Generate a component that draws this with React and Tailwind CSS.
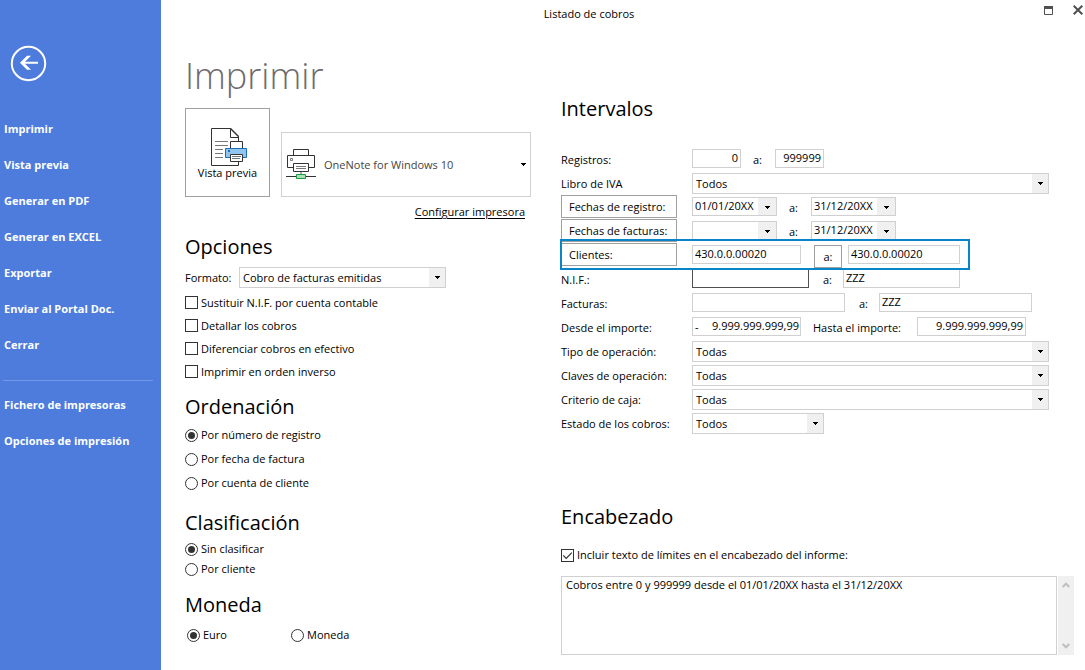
import React from "react";

const field =
  "block border border-[#d0d0d0] bg-white px-[2px] pb-[2px] text-[11px] leading-4 text-black outline-none";

function Caret({ className = "" }) {
  return (
    <svg className={className} width="5" height="3" viewBox="0 0 5 3" aria-hidden="true" shapeRendering="crispEdges">
      <path d="M0 0h5v1H4v1H3v1H2V2H1V1H0z" fill="#000" />
    </svg>
  );
}

function Select({ id, label, value, className = "", options = [] }) {
  return (
    <span className={`relative block h-[21px] ${className}`}>
      <select
        id={id}
        aria-label={label}
        defaultValue={value}
        className="block h-full w-full appearance-none border border-[#d0d0d0] bg-white pl-[3px] pr-5 text-[11px] leading-[18px] text-black outline-none"
      >
        <option>{value}</option>
        {options.map((o) => (
          <option key={o}>{o}</option>
        ))}
      </select>
      <span className="pointer-events-none absolute inset-y-px right-px flex w-4 items-center justify-center bg-[#f0f0f0]">
        <Caret />
      </span>
    </span>
  );
}

function DateBox({ label, value }) {
  return (
    <span className="mt-[2px] flex h-[19px] w-[85px] border border-[#d0d0d0]">
      <input aria-label={label} defaultValue={value} className="w-0 flex-1 bg-white px-[2px] pb-[2px] text-[11px] leading-4 outline-none" />
      <button type="button" aria-label={`Abrir calendario: ${label}`} className="flex w-[18px] items-center justify-center bg-[#f0f0f0] pt-[2px]">
        <Caret />
      </button>
    </span>
  );
}

function Row({ children, className = "" }) {
  return <div className={`flex h-6 items-start ${className}`}>{children}</div>;
}

function Label({ htmlFor, children }) {
  return (
    <label htmlFor={htmlFor} className="w-[131px] shrink-0 leading-[26px]">
      {children}
    </label>
  );
}

function ButtonLabel({ children }) {
  return (
    <span className="w-[131px] shrink-0">
      <button type="button" className="block h-[23px] w-[116px] border border-[#a0a0a0] bg-white pl-[7px] text-left leading-[22px]">
        {children}
      </button>
    </span>
  );
}

function To({ htmlFor, className, children = "a:" }) {
  return (
    <label htmlFor={htmlFor} className={`shrink-0 leading-[26px] ${className}`}>
      {children}
    </label>
  );
}

function SelectRow({ id, label, value, className = "w-[357px]" }) {
  return (
    <Row>
      <Label htmlFor={id}>{label}</Label>
      <Select id={id} value={value} className={`mt-[2px] ${className}`} />
    </Row>
  );
}

function Check({ label, checked = false, className = "" }) {
  return (
    <label className={`flex items-center gap-[3px] ${className}`}>
      <span className="relative block size-[13px]">
        <input type="checkbox" defaultChecked={checked} className="peer block size-[13px] appearance-none border border-[#333] bg-white" />
        <svg className="pointer-events-none absolute inset-0 hidden peer-checked:block" width="13" height="13" viewBox="0 0 13 13" fill="none" stroke="#333" strokeWidth="1.2" aria-hidden="true">
          <path d="M2.2 6.4l3 3 5.6-5.8" />
        </svg>
      </span>
      <span>{label}</span>
    </label>
  );
}

function Radio({ name, label, checked = false, className = "" }) {
  return (
    <label className={`flex items-center gap-[3px] ${className}`}>
      <span className="relative block size-[13px]">
        <input type="radio" name={name} defaultChecked={checked} className="peer block size-[13px] appearance-none rounded-full border border-[#333] bg-white" />
        <span className="pointer-events-none absolute inset-[3px] hidden rounded-full bg-[#333] peer-checked:block" />
      </span>
      <span>{label}</span>
    </label>
  );
}

function Heading({ children, className = "" }) {
  return <h2 className={`text-[20px] leading-8 ${className}`}>{children}</h2>;
}

function PreviewIcon() {
  return (
    <svg className="ml-[3px]" width="36" height="39" viewBox="0 0 36 39" fill="none" aria-hidden="true">
      <path d="M.5.5h19l8 8v29H.5z" fill="#fff" stroke="#333" />
      <path d="M19.5.5v9h8" stroke="#333" />
      <path d="M19.5.5l8 8" stroke="#333" strokeWidth="1.4" />
      <path d="M4 13.5h13M4 17.5h13M4 21.5h8M4 25.5h8M4 29.5h8" stroke="#777" />
      <path d="M19.5 20.5v-7h12v7" fill="#fff" stroke="#333" />
      <path d="M14.5 20.5h21v9h-21z" fill="#92c5ee" stroke="#1a6fb8" />
      <path d="M17 22h2v2h-2z" fill="#1a6fb8" />
      <path d="M19.500 26.500h12v7h-12z" fill="#fff" stroke="#333" />
      <path d="M21 28.500h9M21 30.500h8" stroke="#777" />
    </svg>
  );
}

function PrinterIcon() {
  return (
    <svg width="30" height="31" viewBox="0 0 30 31" fill="none" aria-hidden="true">
      <path d="M7.500 6.500v-6h15v6" fill="#fff" stroke="#333" />
      <path d="M7.500 18.500h-6v-12h27v12h-6" fill="#fff" stroke="#333" />
      <path d="M4.500 9.500h2v2h-2z" stroke="#777" />
      <path d="M7.500 14.500h15v8h-15z" fill="#fff" stroke="#333" />
      <path d="M10 17.500h10M10 19.500h10" stroke="#777" />
      <path d="M15 23v2" stroke="#aaa" strokeWidth="2" />
      <path d="M0 27.500h30" stroke="#333" />
      <path d="M10.500 25.500h9v4h-9z" fill="#a9dfb5" stroke="#1b9a3e" />
    </svg>
  );
}

const menu = ["Imprimir", "Vista previa", "Generar en PDF", "Generar en EXCEL", "Exportar", "Enviar al Portal Doc.", "Cerrar"];
const tools = ["Fichero de impresoras", "Opciones de impresión"];

function MenuItem({ children }) {
  return (
    <li>
      <button type="button" className="block h-9 w-full pl-1 text-left text-[11px] font-bold leading-9 text-white">
        {children}
      </button>
    </li>
  );
}

export default function App() {
  return (
    <div className="flex min-h-screen bg-white font-['Open_Sans','Noto_Sans',sans-serif] text-[11px] leading-4 text-black">
      <nav className="w-[161px] shrink-0 bg-[#4d7cdd]">
        <button type="button" aria-label="Volver" className="ml-[10px] mt-[45px] block">
          <svg width="37" height="37" viewBox="0 0 37 37" fill="none" aria-hidden="true">
            <circle cx="18.500" cy="18.500" r="16.700" stroke="#fff" strokeWidth="2" />
            <path d="M10 17.800l7-7h4l-6 6h13v2H15l6 6h-4z" fill="#fff" />
          </svg>
        </button>
        <ul className="mt-[29px]">
          {menu.map((m) => (
            <MenuItem key={m}>{m}</MenuItem>
          ))}
        </ul>
        <hr className="ml-[3px] mr-2 mt-[17px] border-[#7598e6]" />
        <ul className="mt-[6px]">
          {tools.map((m) => (
            <MenuItem key={m}>{m}</MenuItem>
          ))}
        </ul>
      </nav>

      <div className="flex min-w-0 flex-1 flex-col">
        <header className="grid h-7 grid-cols-[1fr_auto_1fr] items-center pr-[2px]">
          <span />
          <span className="pr-[66px]">Listado de cobros</span>
          <div className="flex items-start justify-end gap-5 pb-2">
            <button type="button" aria-label="Maximizar" className="pt-px">
              <svg width="9" height="9" viewBox="0 0 9 9" fill="none" aria-hidden="true">
                <path d="M.5.5h8v8h-8z" stroke="#505050" />
                <path d="M0 0h9v3H0z" fill="#505050" />
              </svg>
            </button>
            <button type="button" aria-label="Cerrar ventana">
              <svg width="10" height="10" viewBox="0 0 10 10" fill="none" stroke="#505050" strokeWidth="2" aria-hidden="true">
                <path d="M.7.7l8.600 8.600M9.300.7L.7 9.300" />
              </svg>
            </button>
          </div>
        </header>

        <main className="flex flex-1 gap-[30px] pl-6 pr-[11px]">
          <section className="w-[346px] shrink-0 pt-6">
            <h1 className="text-[36px] font-light leading-[48px] text-[#6e6a6d]">Imprimir</h1>
            <div className="mt-2 flex items-end gap-[11px]">
              <button type="button" className="flex h-[89px] w-[85px] shrink-0 flex-col items-center border border-[#a0a0a0] bg-white pt-[19px]">
                <PreviewIcon />
                <span className="leading-3">Vista previa</span>
              </button>
              <button type="button" className="flex h-[65px] flex-1 items-center border border-[#d0d0d0] bg-white pl-1 pr-1 text-[#444]">
                <PrinterIcon />
                <span className="ml-2 flex-1 text-left">OneNote for Windows 10</span>
                <Caret />
              </button>
            </div>
            <div className="mr-[6px] mt-[5px] flex h-5 items-center justify-end">
              <a href="#configurar" className="underline underline-offset-2">Configurar impresora</a>
            </div>

            <Heading className="mt-[9px]">Opciones</Heading>
            <div className="mt-1 flex items-center">
              <label htmlFor="formato" className="w-[54px]">Formato:</label>
              <Select id="formato" value="Cobro de facturas emitidas" className="w-[207px]" />
            </div>
            <div className="mt-[3px]">
              <Check className="h-[23px]" label="Sustituir N.I.F. por cuenta contable" />
              <Check className="h-[23px]" label="Detallar los cobros" />
              <Check className="h-[23px]" label="Diferenciar cobros en efectivo" />
              <Check className="h-[23px]" label="Imprimir en orden inverso" />
            </div>

            <Heading className="mt-2">Ordenación</Heading>
            <Radio className="h-6" name="orden" checked label="Por número de registro" />
            <Radio className="h-6" name="orden" label="Por fecha de factura" />
            <Radio className="h-6" name="orden" label="Por cuenta de cliente" />

            <Heading className="mt-3">Clasificación</Heading>
            <Radio className="h-5" name="clasificacion" checked label="Sin clasificar" />
            <Radio className="h-5" name="clasificacion" label="Por cliente" />

            <Heading className="mt-[10px]">Moneda</Heading>
            <div className="mt-[2px] flex pl-[2px]">
              <Radio className="h-6 w-[104px]" name="moneda" checked label="Euro" />
              <Radio className="h-6" name="moneda" label="Moneda" />
            </div>
          </section>

          <section className="min-w-0 flex-1 pt-[65px]">
            <Heading>Intervalos</Heading>
            <div className="mt-[22px]">
              <Row>
                <Label htmlFor="reg1">Registros:</Label>
                <input id="reg1" defaultValue="0" className={`${field} mt-[2px] h-[19px] w-[49px] text-right`} />
                <To htmlFor="reg2" className="w-[34px] pl-3" />
                <input id="reg2" defaultValue="999999" className={`${field} mt-[2px] h-[19px] w-[49px] text-right`} />
              </Row>
              <SelectRow id="libro" label="Libro de IVA" value="Todos" />
              <Row>
                <ButtonLabel>Fechas de registro:</ButtonLabel>
                <DateBox label="Fecha de registro desde" value="01/01/20XX" />
                <To className="w-[34px] pl-3" />
                <DateBox label="Fecha de registro hasta" value="31/12/20XX" />
              </Row>
              <Row>
                <ButtonLabel>Fechas de facturas:</ButtonLabel>
                <DateBox label="Fecha de factura desde" value="" />
                <To className="w-[34px] pl-3" />
                <DateBox label="Fecha de factura hasta" value="31/12/20XX" />
              </Row>
              <Row className="relative">
                <ButtonLabel>Clientes:</ButtonLabel>
                <input aria-label="Cliente desde" defaultValue="430.0.0.00020" className={`${field} mt-[2px] h-[19px] w-[109px]`} />
                <button type="button" className="ml-[13px] mr-[6px] mt-[2px] h-[23px] w-7 border border-[#a0a0a0] bg-white">a:</button>
                <input aria-label="Cliente hasta" defaultValue="430.0.0.00020" className={`${field} mt-[2px] h-[19px] w-[112px]`} />
                <span className="pointer-events-none absolute -bottom-[3px] -left-px -top-1 z-10 w-[410px] border-2 border-[#0884c8]" />
              </Row>
              <Row>
                <Label htmlFor="nif1">N.I.F.:</Label>
                <input id="nif1" className="mt-[2px] block h-[19px] w-[117px] border border-[#505050] bg-white px-[2px] outline-none" />
                <To htmlFor="nif2" className="w-[34px] pl-[14px]" />
                <input id="nif2" defaultValue="ZZZ" className={`${field} mt-[2px] h-[19px] w-[117px]`} />
              </Row>
              <Row>
                <Label htmlFor="fac1">Facturas:</Label>
                <input id="fac1" className={`${field} mt-[2px] h-[19px] w-[153px]`} />
                <To htmlFor="fac2" className="w-[34px] pl-[14px]" />
                <input id="fac2" defaultValue="ZZZ" className={`${field} mt-[2px] h-[19px] w-[153px]`} />
              </Row>
              <Row>
                <Label htmlFor="imp1">Desde el importe:</Label>
                <span className="mt-[2px] flex h-[19px] w-[109px] border border-[#d0d0d0] pl-[2px] leading-[18px]">
                  <span>-</span>
                  <input id="imp1" defaultValue="9.999.999.999,99" className="w-0 flex-1 pb-[2px] pr-px text-right leading-4 outline-none" />
                </span>
                <To htmlFor="imp2" className="w-[116px] pl-3">Hasta el importe:</To>
                <input id="imp2" defaultValue="9.999.999.999,99" className={`${field} mt-[2px] h-[19px] w-[109px] text-right`} />
              </Row>
              <SelectRow id="tipo" label="Tipo de operación:" value="Todas" />
              <SelectRow id="claves" label="Claves de operación:" value="Todas" />
              <SelectRow id="criterio" label="Criterio de caja:" value="Todas" />
              <SelectRow id="estado" label="Estado de los cobros:" value="Todos" className="w-[132px]" />
            </div>

            <Heading className="mt-[66px]">Encabezado</Heading>
            <Check className="mt-[10px] h-6" checked label="Incluir texto de límites en el encabezado del informe:" />
            <div className="mt-[9px] flex h-[79px] gap-px">
              <textarea
                aria-label="Texto del encabezado"
                defaultValue="Cobros entre 0 y 999999 desde el 01/01/20XX hasta el 31/12/20XX"
                className="block h-full min-w-0 flex-1 resize-none border border-[#d0d0d0] bg-white px-1 leading-4 outline-none"
              />
              <div className="flex w-4 flex-col items-center justify-between bg-[#f0f0f0] py-[6px]">
                <button type="button" aria-label="Subir">
                  <svg width="8" height="6" viewBox="0 0 8 6" fill="none" stroke="#bfbfbf" strokeWidth="2" aria-hidden="true">
                    <path d="M.7 5L4 1.700 7.300 5" />
                  </svg>
                </button>
                <button type="button" aria-label="Bajar">
                  <svg width="8" height="6" viewBox="0 0 8 6" fill="none" stroke="#bfbfbf" strokeWidth="2" aria-hidden="true">
                    <path d="M.7 1L4 4.300 7.300 1" />
                  </svg>
                </button>
              </div>
            </div>
          </section>
        </main>
      </div>
    </div>
  );
}
